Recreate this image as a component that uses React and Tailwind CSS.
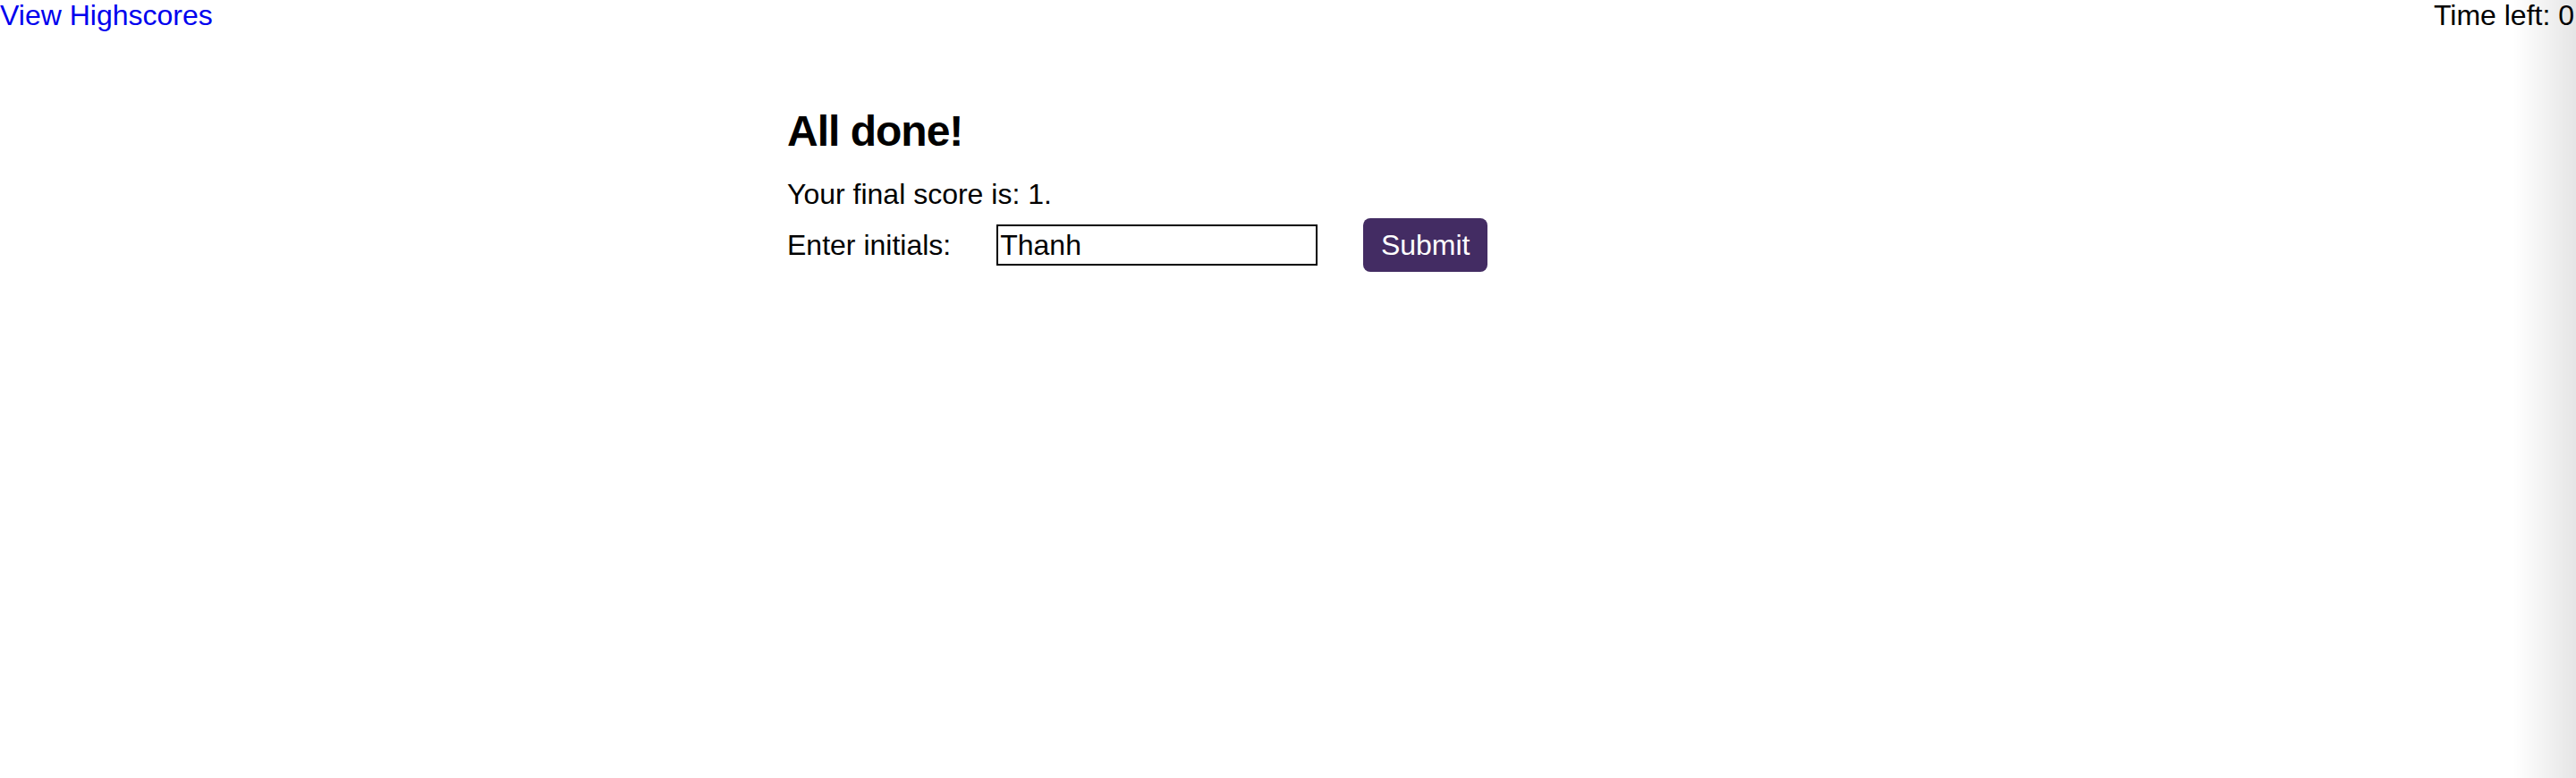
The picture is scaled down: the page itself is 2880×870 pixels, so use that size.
import { useState } from 'react';

const font = { fontFamily: '"Liberation Sans", Arial, sans-serif' };

export default function App() {
  const [initials, setInitials] = useState('Thanh');

  return (
    <div className="relative min-h-[870px] bg-white text-black text-[32px]" style={font}>
      {/* Top bar */}
      <header className="flex items-start justify-between leading-[34px]">
        <a href="#" className="text-[#0000ee]">
          View Highscores
        </a>
        <span className="pr-[2px]">Time left: 0</span>
      </header>

      {/* Result card */}
      <main className="mx-auto w-[1120px] pt-[84px]">
        <h2 className="text-[48px] font-bold leading-[58px] tracking-[-1px]">All done!</h2>
        <p className="mt-[22px] leading-[38px]">Your final score is: 1.</p>
        <form
          className="mt-[8px] flex items-center"
          onSubmit={(e) => e.preventDefault()}
        >
          <label htmlFor="initials" className="leading-[38px]">
            Enter initials:
          </label>
          <input
            id="initials"
            type="text"
            value={initials}
            onChange={(e) => setInitials(e.target.value)}
            className="ml-[51px] h-[46px] w-[359px] border-2 border-black px-[2px] py-[2px] text-[32px] leading-[38px] text-black outline-none"
            style={font}
          />
          <button
            type="submit"
            className="ml-[51px] h-[60px] w-[139px] rounded-[8px] bg-[#432c63] text-[32px] leading-[38px] text-white"
          >
            Submit
          </button>
        </form>
      </main>

      {/* Edge shade */}
      <div className="pointer-events-none fixed right-0 top-0 h-full w-[70px] bg-linear-to-r from-black/0 to-black/10" />
    </div>
  );
}
